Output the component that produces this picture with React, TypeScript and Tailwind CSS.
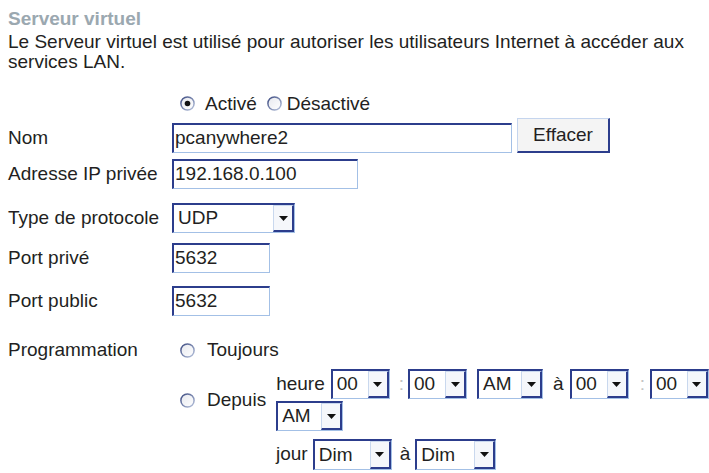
import React from "react";

function Radio({ checked }: { checked?: boolean }) {
  return (
    <svg width="15" height="15" viewBox="0 0 15 15" className="shrink-0">
      <defs>
        <linearGradient id="rg" x1="0" y1="0" x2="1" y2="1">
          <stop offset="0" stopColor="#3c4a80" />
          <stop offset="1" stopColor="#b9c5de" />
        </linearGradient>
        <linearGradient id="rf" x1="0" y1="0" x2="1" y2="1">
          <stop offset="0" stopColor="#e6e8ee" />
          <stop offset="1" stopColor="#ffffff" />
        </linearGradient>
      </defs>
      <circle cx="7.5" cy="7.5" r="6.6" fill="url(#rf)" stroke="url(#rg)" strokeWidth="1.5" />
      {checked && <circle cx="7.5" cy="7.5" r="2.8" fill="#111111" />}
    </svg>
  );
}

function TextBox({ value, className }: { value: string; className: string }) {
  return (
    <div
      className={
        "flex h-[30px] items-center border-t-2 border-l-2 border-r border-b border-t-[#2c3d8c] border-l-[#2c3d8c] border-r-[#a3c0e6] border-b-[#a3c0e6] bg-white pl-[1px] " +
        className
      }
    >
      {value}
    </div>
  );
}

function Select({ value, className }: { value: string; className: string }) {
  return (
    <div
      className={
        "flex h-[30px] shrink-0 border-t-2 border-l-2 border-r border-b border-t-[#2c3d8c] border-l-[#2c3d8c] border-r-[#a3c0e6] border-b-[#a3c0e6] bg-white " +
        className
      }
    >
      <div className="flex flex-1 items-center pl-[4px]">{value}</div>
      <div className="flex w-[21px] items-center justify-center border-t border-l border-r-2 border-b-2 border-t-[#c9d8ee] border-l-[#c9d8ee] border-r-[#2c3d8c] border-b-[#2c3d8c] bg-[#f5f7fb]">
        <svg width="9" height="5" viewBox="0 0 9 5">
          <path d="M0 0H9L4.5 5Z" fill="#111111" />
        </svg>
      </div>
    </div>
  );
}

function Label({ children }: { children: React.ReactNode }) {
  return <div className="flex w-[164px] shrink-0 items-center">{children}</div>;
}

export default function App() {
  return (
    <div
      className="h-[473px] w-[709px] overflow-hidden bg-white pt-[8px] pl-[8px] text-[19px] text-[#231f22]"
      style={{ fontFamily: '"Liberation Sans", Arial, sans-serif' }}
    >
      <div className="font-bold leading-[22px] text-[#9ba8b0]">Serveur virtuel</div>
      <div className="mt-[2px] pr-[10px] leading-[20px]">
        Le Serveur virtuel est utilisé pour autoriser les utilisateurs Internet à accéder aux services LAN.
      </div>

      {/* Enable radios */}
      <div className="mt-[21px] flex h-[20px] items-center leading-none">
        <div className="w-[164px] shrink-0" />
        <div className="ml-[8px] flex items-center">
          <Radio checked />
          <span className="ml-[10px]">Activé</span>
          <span className="ml-[10px] flex">
            <Radio />
          </span>
          <span className="ml-[5px]">Désactivé</span>
        </div>
      </div>

      {/* Nom */}
      <div className="mt-[5px] flex h-[35px] items-end">
        <div className="flex h-[30px] w-[164px] shrink-0 items-center">Nom</div>
        <TextBox value="pcanywhere2" className="w-[340px]" />
        <div className="ml-[5px] flex h-[35px] w-[93px] items-center justify-center border-t border-l border-r-2 border-b-2 border-t-[#c5d5ee] border-l-[#c5d5ee] border-r-[#2c3d8c] border-b-[#2c3d8c] bg-[#f4f4f4]">
          Effacer
        </div>
      </div>

      {/* Adresse IP */}
      <div className="mt-[6px] flex h-[30px]">
        <Label>Adresse IP privée</Label>
        <TextBox value="192.168.0.100" className="w-[186px]" />
      </div>

      {/* Type de protocole */}
      <div className="mt-[14px] flex h-[30px]">
        <Label>Type de protocole</Label>
        <Select value="UDP" className="w-[123px]" />
      </div>

      {/* Port privé */}
      <div className="mt-[10px] flex h-[30px]">
        <Label>Port privé</Label>
        <TextBox value="5632" className="w-[98px]" />
      </div>

      {/* Port public */}
      <div className="mt-[13px] flex h-[30px]">
        <Label>Port public</Label>
        <TextBox value="5632" className="w-[98px]" />
      </div>

      {/* Programmation */}
      <div className="mt-[22px] flex h-[24px] items-center">
        <Label>Programmation</Label>
        <div className="ml-[8px] flex items-center">
          <Radio />
          <span className="ml-[12px]">Toujours</span>
        </div>
      </div>

      {/* Depuis */}
      <div className="mt-[7px] flex items-center">
        <div className="w-[164px] shrink-0" />
        <div className="ml-[8px] flex items-center">
          <Radio />
          <span className="ml-[12px]">Depuis</span>
        </div>
        <div className="ml-[10px] flex flex-col">
          <div className="flex h-[30px] items-center whitespace-nowrap">
            <span>heure</span>
            <Select value="00" className="ml-[6px] w-[59px]" />
            <span className="ml-[9px] text-[#c4c4c4]">:</span>
            <Select value="00" className="ml-[4px] w-[59px]" />
            <Select value="AM" className="ml-[10px] w-[66px]" />
            <span className="ml-[10px]">à</span>
            <Select value="00" className="ml-[6px] w-[59px]" />
            <span className="ml-[11px] text-[#c4c4c4]">:</span>
            <Select value="00" className="ml-[5px] w-[59px]" />
          </div>
          <div className="mt-[2px] flex h-[30px] items-center">
            <Select value="AM" className="w-[67px]" />
          </div>
        </div>
      </div>

      {/* jour */}
      <div className="mt-[8px] flex h-[31px] items-center">
        <div className="w-[268px] shrink-0" />
        <span>jour</span>
        <Select value="Dim" className="ml-[5px] h-[31px] w-[79px]" />
        <span className="ml-[8px]">à</span>
        <Select value="Dim" className="ml-[5px] h-[31px] w-[81px]" />
      </div>
    </div>
  );
}
